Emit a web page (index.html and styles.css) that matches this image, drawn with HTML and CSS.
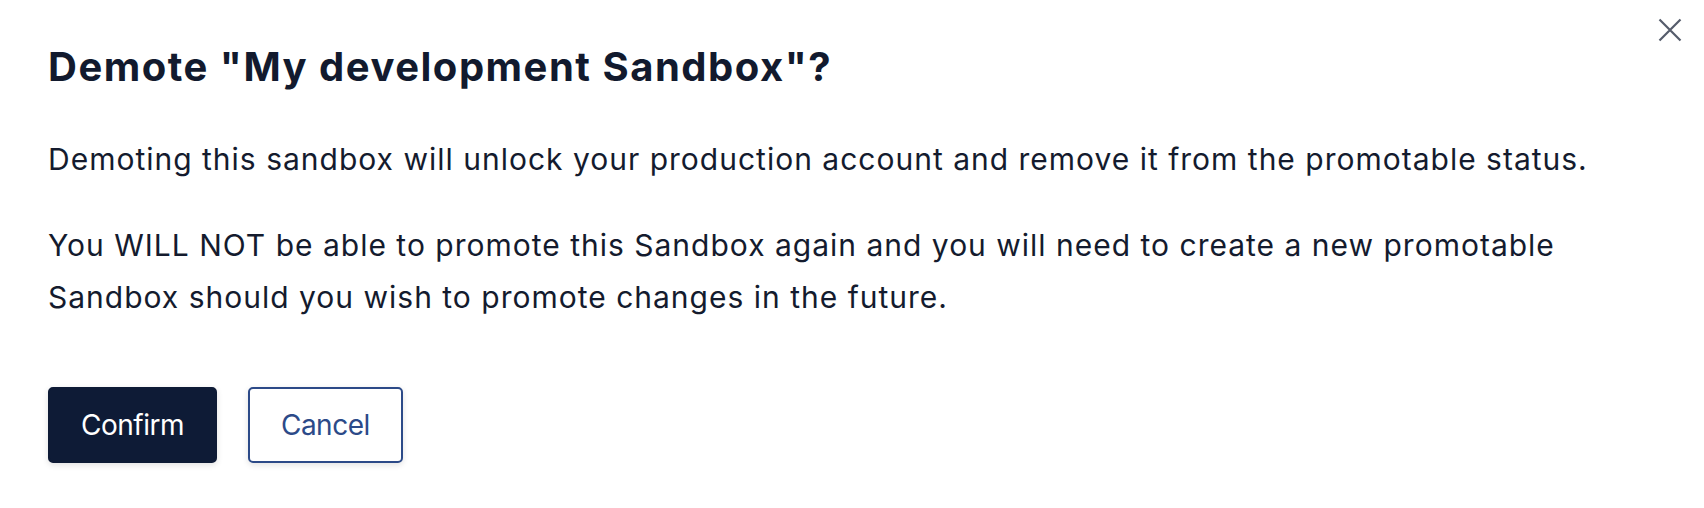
FILE: index.html
```html
<!DOCTYPE html>
<html lang="en">
<head>
  <meta charset="UTF-8">
  <meta name="viewport" content="width=device-width, initial-scale=1.0">
  <title>Demote Sandbox</title>
  <link rel="stylesheet" href="styles.css">
</head>
<body>
  <!-- Demote Dialog -->
  <div class="dialog" role="dialog" aria-labelledby="dialogTitle">
    <button class="close" id="closeDialog" aria-label="Close">
      <svg width="24" height="24" viewBox="0 0 24 24">
        <path d="M1.5 1.5 L22.5 22.5 M22.5 1.5 L1.5 22.5" stroke="#555c6b" stroke-width="2.2" fill="none"/>
      </svg>
    </button>

    <h2 class="dialog-title" id="dialogTitle">Demote "My development Sandbox"?</h2>

    <div class="dialog-body">
      <p>Demoting this sandbox will unlock your production account and remove it from the promotable status.</p>
      <p>You WILL NOT be able to promote this Sandbox again and you will need to create a new promotable<br>Sandbox should you wish to promote changes in the future.</p>
    </div>

    <div class="dialog-actions">
      <button class="btn btn-primary" id="confirmBtn">Confirm</button>
      <button class="btn btn-secondary" id="cancelBtn">Cancel</button>
    </div>
  </div>
</body>
</html>
```

FILE: styles.css
```css
body {
  font-family: Inter, "Noto Sans", Arial, sans-serif;
  background-color: #fff;
  color: #141b2e;
  margin: 0;
  padding: 0;
}
.dialog {
  position: relative;
  padding: 43px 48px 40px;
}
.close {
  position: absolute;
  top: 18px;
  right: 22px;
  padding: 0;
  border: none;
  background: none;
  cursor: pointer;
  line-height: 0;
}
.dialog-title {
  margin: 0;
  font-size: 40px;
  line-height: 48px;
  font-weight: 700;
  letter-spacing: 1.5px;
  color: #121a2e;
}
.dialog-body {
  margin-top: 42px;
}
.dialog-body p {
  margin: 0 0 34px;
  font-size: 30px;
  line-height: 52px;
  letter-spacing: 1px;
}
.dialog-body p:last-child {
  margin-bottom: 0;
}
.dialog-actions {
  display: flex;
  gap: 31px;
  margin-top: 64px;
}
.btn {
  height: 76px;
  padding: 0 31px;
  font-family: inherit;
  font-size: 28px;
  letter-spacing: -0.5px;
  border-radius: 5px;
  cursor: pointer;
  box-shadow: 0px 2px 6px rgba(0, 0, 0, 0.12);
}
.btn-primary {
  background-color: #0e1b36;
  color: #fff;
  border: 2px solid #0e1b36;
}
.btn-secondary {
  background-color: #fff;
  color: #2c4a88;
  border: 2px solid #2c4a88;
}
```
